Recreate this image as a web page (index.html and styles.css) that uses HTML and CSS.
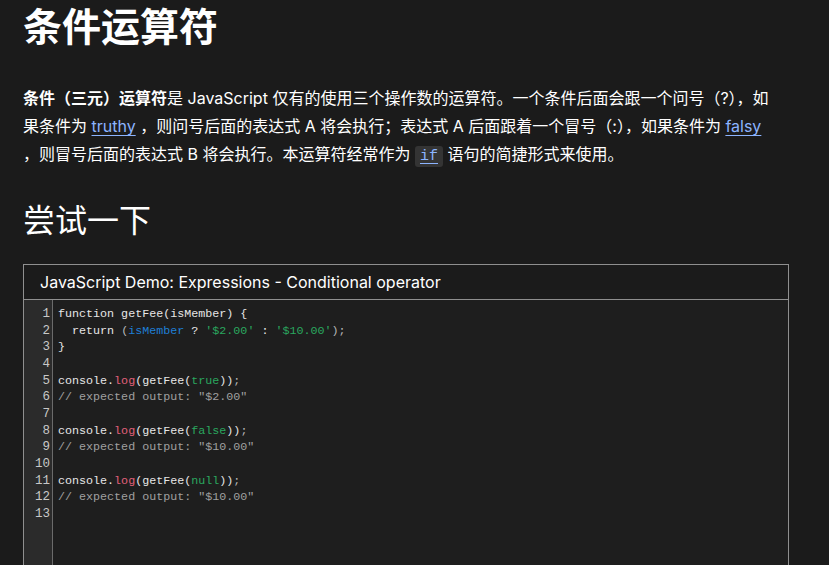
FILE: index.html
```html
<!DOCTYPE html>
<html lang="zh-CN">
<head>
<meta charset="utf-8">
<link rel="stylesheet" href="styles.css">
</head>
<body>
<main class="page">
  <h1 class="title">条件运算符</h1>
  <p class="intro"><strong>条件（三元）运算符</strong>是 JavaScript 仅有的使用三个操作数的运算符。一个条件后面会跟一个问号（?），如<br>果条件为 <a href="#">truthy</a> ，则问号后面的表达式 A 将会执行；表达式 A 后面跟着一个冒号（:），如果条件为 <a href="#">falsy</a><br>，则冒号后面的表达式 B 将会执行。本运算符经常作为 <a href="#" class="inline-code">if</a> 语句的简捷形式来使用。</p>
  <h2 class="subtitle">尝试一下</h2>
  <section class="demo">
    <header class="demo-head">JavaScript Demo: Expressions - Conditional operator</header>
    <div class="editor">
      <div class="gutter">
        <div>1</div><div>2</div><div>3</div><div>4</div><div>5</div><div>6</div><div>7</div><div>8</div><div>9</div><div>10</div><div>11</div><div>12</div><div>13</div>
      </div>
      <pre class="code"><span>function getFee(isMember) {</span>
<span>  return <span class="p">(</span><span class="v">isMember</span> ? <span class="s">'$2.00'</span> : <span class="s">'$10.00'</span><span class="p">);</span></span>
<span>}</span>
<span></span>
<span>console.<span class="f">log</span>(getFee(<span class="k">true</span>))<span class="p">;</span></span>
<span class="c">// expected output: "$2.00"</span>
<span></span>
<span>console.<span class="f">log</span>(getFee(<span class="k">false</span>))<span class="p">;</span></span>
<span class="c">// expected output: "$10.00"</span>
<span></span>
<span>console.<span class="f">log</span>(getFee(<span class="k">null</span>))<span class="p">;</span></span>
<span class="c">// expected output: "$10.00"</span>
<span></span></pre>
    </div>
  </section>
</main>
</body>
</html>
```

FILE: styles.css
```css
html, body {
  margin: 0;
  background: #1b1b1b;
  color: #ffffff;
  font-family: "Inter", "Noto Sans CJK SC", sans-serif;
}

.page {
  padding: 3px 40px 0 23px;
  width: 766px;
}

.title {
  margin: 0;
  font-size: 39px;
  line-height: 48px;
  font-weight: 700;
}

.intro {
  margin: 33px 0 0;
  font-size: 16px;
  line-height: 28px;
  white-space: nowrap;
}

.intro .first {
  letter-spacing: 0.1px;
}

.intro strong {
  font-weight: 700;
}

.intro a {
  color: #8cb4ff;
  text-decoration: underline;
  text-underline-offset: 3px;
}

.intro a.inline-code {
  font-family: "Liberation Mono", monospace;
  font-size: 15px;
  background: #343434;
  border-radius: 3px;
  padding: 2px 5px;
}

.subtitle {
  margin: 30px 0 0;
  font-size: 32px;
  line-height: 40px;
  font-weight: 400;
}

.demo {
  margin-top: 23px;
  border: 1px solid #8f8f8f;
  border-bottom: none;
  height: 320px;
  display: flex;
  flex-direction: column;
}

.demo-head {
  height: 35px;
  display: flex;
  align-items: center;
  padding-left: 16px;
  padding-bottom: 1px;
  box-sizing: border-box;
  font-size: 16px;
  border-bottom: 1px solid #8f8f8f;
  background: #1b1b1b;
}

.editor {
  flex: 1;
  display: flex;
  background: #1e1e1e;
}

.gutter {
  width: 26px;
  padding: 6px 2px 0 0;
  text-align: right;
  background: #2b2b2b;
  border-right: 1px solid #6b6b6b;
  color: #c8c8c8;
  font-family: "Liberation Mono", monospace;
  font-size: 12.5px;
  line-height: 16.67px;
}

.code {
  margin: 0;
  padding: 6px 0 0 5px;
  font-family: "Liberation Mono", monospace;
  font-size: 11.7px;
  line-height: 16.67px;
  color: #e6e6e6;
}

.code .v { color: #1f7fd6; }
.code .s { color: #2aa75f; }
.code .k { color: #2aa75f; }
.code .f { color: #e0607a; }
.code .c { color: #a0a0a0; }
.code .p { color: #b8b8b8; }
```
